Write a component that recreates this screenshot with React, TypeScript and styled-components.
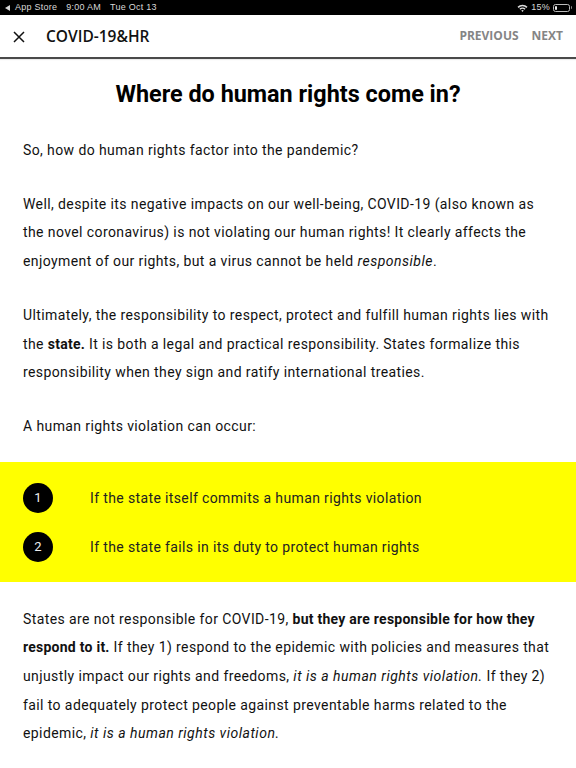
import React from "react";
import styled, { createGlobalStyle } from "styled-components";

const Global = createGlobalStyle`
  html, body { margin: 0; padding: 0; background: #fff; }
  body { width: 576px; height: 768px; overflow: hidden; }
`;
const Page = styled.div`
  width: 576px; height: 768px; overflow: hidden; display: flex; flex-direction: column;
  font-family: "Roboto", "Liberation Sans", sans-serif; color: #111;
`;
const StatusBar = styled.div`
  height: 15px; flex: none; background: #000; color: #d8d8d8; display: flex; align-items: center;
  justify-content: space-between; padding: 0 4px 0 5px;
  font: 9px/15px "Liberation Sans", Arial, sans-serif; letter-spacing: 0.25px;
`;
const StatusGroup = styled.div`
  display: flex; align-items: center; gap: ${p => p.$gap ?? 9}px;
`;
const BackArrow = styled.span`
  width: 0; height: 0; border-style: solid; border-width: 3.5px 5px 3.5px 0;
  border-color: transparent #d8d8d8 transparent transparent;
`;
const Battery = styled.span`
  width: 17px; height: 8px; box-sizing: border-box; border: 1px solid #bbb; border-radius: 2.5px;
  padding: 1px; display: flex; position: relative; margin-right: 2px;
  &::before { content: ""; width: 2px; background: #eee; border-radius: 1px; }
  &::after { content: ""; position: absolute; right: -3px; top: 1.5px; width: 1.5px; height: 3px; background: #888; border-radius: 0 1px 1px 0; }
`;
const NavBar = styled.header`
  height: 41px; flex: none; display: flex; align-items: center; padding: 0 13px 1px 13px;
  border-bottom: 2px solid #4a4a4a; box-shadow: 0 1px 1px rgba(0,0,0,.08);
`;
const CloseButton = styled.span`
  display: flex; width: 12px; height: 12px; margin-right: 21px; margin-top: 2px;
`;
const NavTitle = styled.div`
  font: 600 15.5px "Open Sans", sans-serif; color: #111; flex: 1;
`;
const NavLink = styled.span`
  font: 700 12px "Open Sans", sans-serif; color: #858585; margin-left: 13px;
`;
const Content = styled.main`
  flex: 1; display: flex; flex-direction: column;
`;
const Heading = styled.h1`
  margin: 18px 0 0; text-align: center; font: 700 23.4px/34px "Roboto", sans-serif; color: #000;
`;
const Section = styled.div`
  padding: 0 23px;
  margin-top: ${p => p.$top ?? 0}px;
  white-space: nowrap;
`;
const Para = styled.p`
  margin: 0 0 ${p => p.$bottom ?? 25}px; font-size: 14px; line-height: 28.7px; letter-spacing: 0.4px; color: #111;
  b { font-weight: 700; letter-spacing: 0.25px; }
  i { font-style: italic; letter-spacing: 0.5px; }
`;
const Callout = styled.section`
  background: #ffff00; padding: 21px 23px 20.3px; display: flex; flex-direction: column; gap: 19px;
`;
const CalloutRow = styled.div`
  display: flex; align-items: center; height: 30px;
`;
const Bullet = styled.span`
  width: 30px; height: 30px; border-radius: 50%; background: #000; color: #eee; flex: none;
  display: flex; align-items: center; justify-content: center; font-size: 13px; margin-right: 37px;
`;
const CalloutText = styled.span`
  font-size: 14px; letter-spacing: 0.37px; color: #222;
`;

export default function App() {
  return (
    <Page>
      <Global />
      <StatusBar>
        <StatusGroup>
          <StatusGroup $gap={5}>
            <BackArrow />
            <span>App Store</span>
          </StatusGroup>
          <span>9:00 AM</span>
          <span>Tue Oct 13</span>
        </StatusGroup>
        <StatusGroup $gap={3}>
          <svg width="11" height="8" viewBox="0 0 11 8">
            <path d="M0.5 2.8 A7 7 0 0 1 10.5 2.8 L9.4 3.9 A5.4 5.4 0 0 0 1.6 3.9 Z" fill="#ddd" />
            <path d="M2.4 4.7 A4.3 4.3 0 0 1 8.6 4.7 L7.5 5.8 A2.8 2.8 0 0 0 3.5 5.8 Z" fill="#ddd" />
            <path d="M4.3 6.6 A1.7 1.7 0 0 1 6.7 6.6 L5.5 7.9 Z" fill="#ddd" />
          </svg>
          <span>15%</span>
          <Battery />
        </StatusGroup>
      </StatusBar>
      <NavBar>
        <CloseButton>
          <svg width="12" height="12" viewBox="0 0 12 12">
            <path d="M1 1 L11 11 M11 1 L1 11" stroke="#111" strokeWidth="1.5" fill="none" />
          </svg>
        </CloseButton>
        <NavTitle>COVID-19&amp;HR</NavTitle>
        <NavLink>PREVIOUS</NavLink>
        <NavLink>NEXT</NavLink>
      </NavBar>
      <Content>
        <Heading>Where do human rights come in?</Heading>
        <Section $top={25}>
          <Para>So, how do human rights factor into the pandemic?</Para>
          <Para>
            Well, despite its negative impacts on our well-being, COVID-19 (also known as
            <br />
            the novel coronavirus) is not violating our human rights! It clearly affects the
            <br />
            enjoyment of our rights, but a virus cannot be held <i>responsible</i>.
          </Para>
          <Para>
            Ultimately, the responsibility to respect, protect and fulfill human rights lies with
            <br />
            the <b>state.</b> It is both a legal and practical responsibility. States formalize this
            <br />
            responsibility when they sign and ratify international treaties.
          </Para>
          <Para $bottom={21}>A human rights violation can occur:</Para>
        </Section>
        <Callout>
          <CalloutRow>
            <Bullet>1</Bullet>
            <CalloutText>If the state itself commits a human rights violation</CalloutText>
          </CalloutRow>
          <CalloutRow>
            <Bullet>2</Bullet>
            <CalloutText>If the state fails in its duty to protect human rights</CalloutText>
          </CalloutRow>
        </Callout>
        <Section $top={22.7}>
          <Para>
            States are not responsible for COVID-19, <b>but they are responsible for how they</b>
            <br />
            <b>respond to it.</b> If they 1) respond to the epidemic with policies and measures that
            <br />
            unjustly impact our rights and freedoms, <i>it is a human rights violation.</i> If they 2)
            <br />
            fail to adequately protect people against preventable harms related to the
            <br />
            epidemic, <i>it is a human rights violation.</i>
          </Para>
        </Section>
      </Content>
    </Page>
  );
}
